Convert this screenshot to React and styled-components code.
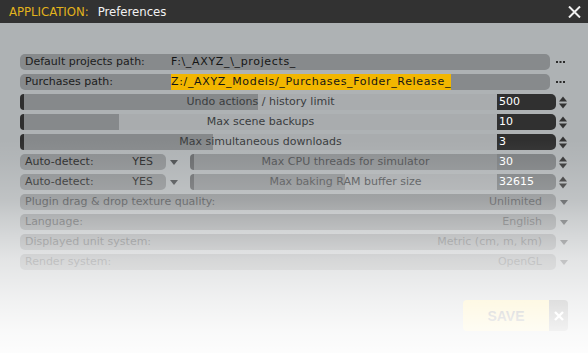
import React from "react";
import styled, { createGlobalStyle } from "styled-components";

const GlobalStyle = createGlobalStyle`
  html, body {
    margin: 0;
    padding: 0;
    background: #ffffff;
  }
  body {
    font-family: "DejaVu Sans", Tahoma, sans-serif;
  }
`;

const Window = styled.div`
  position: relative;
  width: 588px;
  height: 353px;
  display: flex;
  flex-direction: column;
  overflow: hidden;
  font-size: 11px;
`;

const TitleBar = styled.div`
  flex: none;
  height: 23px;
  background: #323232;
  display: flex;
  align-items: center;
  padding: 0 7px 0 9px;
  font-family: "DejaVu Sans Condensed", "DejaVu Sans", sans-serif;
  font-size: 13px;
`;

const AppName = styled.span`
  color: #e2b31d;
  margin-right: 9px;
`;

const Title = styled.span`
  color: #f2f2f2;
  flex: 1;
`;

const CloseIcon = styled.svg`
  display: block;
  width: 13px;
  height: 12px;
`;

const Body = styled.div`
  flex: 1;
  background: #aeb2b4;
  padding: 31px 18px 0 20px;
  display: flex;
  flex-direction: column;
`;

const Rows = styled.div`
  display: flex;
  flex-direction: column;
  gap: 4px;
`;

const Row = styled.div`
  display: flex;
  align-items: center;
  height: 16px;
  line-height: 16px;
`;

const PathBar = styled.div`
  flex: 1;
  height: 16px;
  margin-right: 6px;
  background: #878a8c;
  border-radius: 5px;
  display: flex;
  padding-left: 5px;
  color: #1c1c1c;
  white-space: nowrap;
  overflow: hidden;
`;

const PathLabel = styled.span`
  width: 146px;
  flex: none;
`;

const PathValue = styled.span`
  background: ${({ $highlight }) => ($highlight ? "#f2b600" : "transparent")};
  color: #151515;
  letter-spacing: 0.66px;
`;

const Trail = styled.div`
  flex: none;
  width: 14px;
  height: 16px;
  display: flex;
  align-items: center;
  padding-left: ${({ $pad }) => $pad}px;
  box-sizing: border-box;
`;

const Slider = styled.div`
  flex: 1;
  height: 16px;
  box-sizing: border-box;
  border-left: 4px solid ${({ $dim }) => ($dim ? "#67696b" : "#2e2e2e")};
  border-radius: 4px 0 0 4px;
  background: ${({ $fill, $dim }) =>
    `linear-gradient(to right, ${$dim ? "#8c8f91" : "#86898b"} 0 ${$fill}%, ${
      $dim ? "#a6a9ab" : "#a9acae"
    } ${$fill}% 100%)`};
  text-align: center;
  color: ${({ $dim }) => ($dim ? "#4c4e50" : "#3a3c3e")};
  white-space: nowrap;
`;

const ValueBox = styled.div`
  flex: none;
  width: 59px;
  height: 16px;
  box-sizing: border-box;
  padding-left: 2px;
  background: ${({ $dim }) => ($dim ? "#7b7e80" : "#303030")};
  color: #ffffff;
  border-radius: 0 5px 5px 0;
`;

const AutoPill = styled.div`
  flex: none;
  width: 146px;
  height: 16px;
  box-sizing: border-box;
  padding: 0 13px 0 5px;
  background: #8a8d8f;
  border-radius: 5px;
  display: flex;
  justify-content: space-between;
  color: #262626;
`;

const AutoCaret = styled.div`
  flex: none;
  display: flex;
  align-items: center;
  margin: 0 12px 0 4px;
`;

const SelectBar = styled.div`
  flex: 1;
  height: 16px;
  box-sizing: border-box;
  padding: 0 14px 0 5px;
  background: #878a8c;
  border-radius: 5px;
  display: flex;
  justify-content: space-between;
  color: #404244;
  white-space: nowrap;
`;

const SelectValue = styled.span`
  color: #4a4c4e;
`;

const Footer = styled.div`
  margin-top: 30px;
  padding-right: 2px;
  display: flex;
  justify-content: flex-end;
`;

const SaveButton = styled.button`
  width: 86px;
  height: 31px;
  border: none;
  border-radius: 4px 0 0 4px;
  background: #f9dc6a;
  color: #3a3a3a;
  font-family: "Liberation Sans", Arial, sans-serif;
  font-weight: 700;
  font-size: 14px;
  padding: 0;
`;

const CancelButton = styled.button`
  width: 19px;
  height: 31px;
  border: none;
  border-radius: 0 4px 4px 0;
  background: #4e4e4e;
  padding: 0;
  display: flex;
  align-items: center;
  justify-content: center;
`;

const Fade = styled.div`
  position: absolute;
  inset: 0;
  pointer-events: none;
  background: linear-gradient(
    to bottom,
    rgba(255, 255, 255, 0) 0px,
    rgba(255, 255, 255, 0) 140px,
    rgba(255, 255, 255, 0.06) 160px,
    rgba(255, 255, 255, 0.22) 200px,
    rgba(255, 255, 255, 0.38) 220px,
    rgba(255, 255, 255, 0.52) 240px,
    rgba(255, 255, 255, 0.66) 260px,
    rgba(255, 255, 255, 0.82) 300px,
    rgba(255, 255, 255, 0.92) 330px,
    rgba(255, 255, 255, 0.97) 353px
  );
`;

const Dots = () => (
  <svg width="10" height="3" viewBox="0 0 10 3">
    <rect x="0" y="0" width="2" height="2" fill="#2c2c2c" />
    <rect x="3.5" y="0" width="2" height="2" fill="#2c2c2c" />
    <rect x="7" y="0" width="2" height="2" fill="#2c2c2c" />
  </svg>
);

const Spinner = () => (
  <svg width="8" height="13" viewBox="0 0 8 13">
    <path d="M0 5.5 L4 0.5 L8 5.5 Z" fill="#333" />
    <path d="M0 7.5 L4 12.5 L8 7.5 Z" fill="#333" />
  </svg>
);

const Caret = () => (
  <svg width="8" height="5" viewBox="0 0 8 5">
    <path d="M0 0 L8 0 L4 5 Z" fill="#4a4d4f" />
  </svg>
);

const paths = [
  { label: "Default projects path:", value: "F:\\_AXYZ_\\_projects_" },
  {
    label: "Purchases path:",
    value: "Z:/_AXYZ_Models/_Purchases_Folder_Release_",
    highlight: true,
  },
];

const sliders = [
  { label: "Undo actions / history limit", value: "500", fill: 49.5 },
  { label: "Max scene backups", value: "10", fill: 20 },
  { label: "Max simultaneous downloads", value: "3", fill: 40 },
];

const autoRows = [
  { label: "Max CPU threads for simulator", value: "30", fill: 100 },
  { label: "Max baking RAM buffer size", value: "32615", fill: 50 },
];

const selects = [
  { label: "Plugin drag & drop texture quality:", value: "Unlimited" },
  { label: "Language:", value: "English" },
  { label: "Displayed unit system:", value: "Metric (cm, m, km)" },
  { label: "Render system:", value: "OpenGL" },
];

export default function App() {
  return (
    <>
      <GlobalStyle />
      <Window>
        <TitleBar>
          <AppName>APPLICATION:</AppName>
          <Title>Preferences</Title>
          <CloseIcon viewBox="0 0 13 12">
            <path
              d="M1 0.5 L12 11.5 M12 0.5 L1 11.5"
              stroke="#f0f0f0"
              strokeWidth="2"
            />
          </CloseIcon>
        </TitleBar>
        <Body>
          <Rows>
            {paths.map((p) => (
              <Row key={p.label}>
                <PathBar>
                  <PathLabel>{p.label}</PathLabel>
                  <PathValue $highlight={p.highlight}>{p.value}</PathValue>
                </PathBar>
                <Trail $pad={0}>
                  <Dots />
                </Trail>
              </Row>
            ))}
            {sliders.map((s) => (
              <Row key={s.label}>
                <Slider $fill={s.fill}>{s.label}</Slider>
                <ValueBox>{s.value}</ValueBox>
                <Trail $pad={3}>
                  <Spinner />
                </Trail>
              </Row>
            ))}
            {autoRows.map((s) => (
              <Row key={s.label}>
                <AutoPill>
                  <span>Auto-detect:</span>
                  <span>YES</span>
                </AutoPill>
                <AutoCaret>
                  <Caret />
                </AutoCaret>
                <Slider $fill={s.fill} $dim>
                  {s.label}
                </Slider>
                <ValueBox $dim>{s.value}</ValueBox>
                <Trail $pad={3}>
                  <Spinner />
                </Trail>
              </Row>
            ))}
            {selects.map((s) => (
              <Row key={s.label}>
                <SelectBar>
                  <span>{s.label}</span>
                  <SelectValue>{s.value}</SelectValue>
                </SelectBar>
                <Trail $pad={4}>
                  <Caret />
                </Trail>
              </Row>
            ))}
          </Rows>
          <Footer>
            <SaveButton>SAVE</SaveButton>
            <CancelButton>
              <svg width="10" height="10" viewBox="0 0 10 10">
                <path
                  d="M1 1 L9 9 M9 1 L1 9"
                  stroke="#ffffff"
                  strokeWidth="2.4"
                />
              </svg>
            </CancelButton>
          </Footer>
        </Body>
        <Fade />
      </Window>
    </>
  );
}
